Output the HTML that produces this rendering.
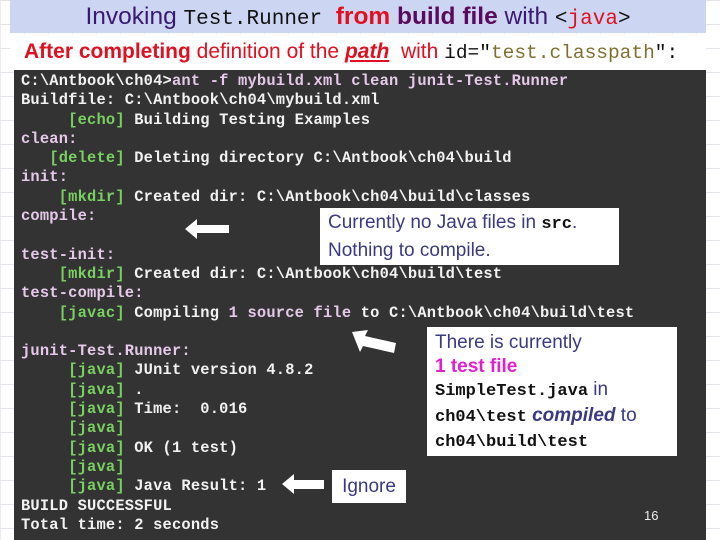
<!DOCTYPE html>
<html><head><meta charset="utf-8"><style>
*{margin:0;padding:0}
body{width:720px;height:540px;position:relative;overflow:hidden;background:#fff;font-family:"Liberation Sans",sans-serif;
background-image:linear-gradient(#e4e4ea 1px,transparent 1px),linear-gradient(90deg,#ececf0 1px,transparent 1px);background-size:24px 24px}
.title{position:absolute;left:10px;top:0;width:696px;height:33px;background:#ccd6f2;text-align:center;font-size:24.5px;line-height:34px;color:#3a1a70;white-space:nowrap}
.m{font-family:"Liberation Mono",monospace;color:#111}
.sub{position:absolute;left:10px;top:34px;width:696px;height:36px;background:#fff;font-size:21px;line-height:36px;color:#e01020;white-space:nowrap;padding-left:14px;box-sizing:border-box}
.term{position:absolute;left:14px;top:70px;width:692px;height:470px;background:#333}
pre{position:absolute;left:21px;top:72px;font-family:"Liberation Mono",monospace;font-weight:bold;font-size:15.4px;letter-spacing:0.2px;line-height:19.3px;color:#f2f2f2}
.p{color:#e6c8ea}.g{color:#78d060}
.box{position:absolute;background:#fff;color:#3a3a80;font-size:19px}
.arrow{position:absolute}
</style></head><body>
<div class="title">Invoking <span class="m" style="font-size:21px">Test.Runner</span> <b style="color:#e01020">&nbsp;from</b> <b style="color:#5a0a5a">build file</b> with <span class="m" style="font-size:21px">&lt;<span style="color:#e01020">java</span>&gt;</span></div>
<div class="sub"><b>After completing</b> definition of the <b><i><u>path</u></i></b>&nbsp; with <span class="m" style="font-size:19.5px">id="<span style="color:#807030">test.classpath</span>":</span></div>
<div class="term"></div>
<pre>C:\Antbook\ch04&gt;<span class="p">ant -f mybuild.xml clean junit-Test.Runner</span>
Buildfile: C:\Antbook\ch04\mybuild.xml
     <span class="g">[echo]</span> Building Testing Examples
<span class="p">clean:</span>
   <span class="g">[delete]</span> Deleting directory C:\Antbook\ch04\build
<span class="p">init:</span>
    <span class="g">[mkdir]</span> Created dir: C:\Antbook\ch04\build\classes
<span class="p">compile:</span>

<span class="p">test-init:</span>
    <span class="g">[mkdir]</span> Created dir: C:\Antbook\ch04\build\test
<span class="p">test-compile:</span>
    <span class="g">[javac]</span> Compiling <span class="p">1 source file</span> to C:\Antbook\ch04\build\test

<span class="p">junit-Test.Runner:</span>
     <span class="g">[java]</span> JUnit version 4.8.2
     <span class="g">[java]</span> .
     <span class="g">[java]</span> Time:  0.016
     <span class="g">[java]</span>
     <span class="g">[java]</span> OK (1 test)
     <span class="g">[java]</span>
     <span class="g">[java]</span> Java Result: 1
BUILD SUCCESSFUL
Total time: 2 seconds</pre>
<div class="box" style="left:320px;top:208px;width:299px;height:57px;line-height:26px;padding-left:8px;box-sizing:border-box;padding-top:2px">Currently no Java files in <b class="m" style="font-size:17px">src</b>.<br>Nothing to compile.</div>
<div class="box" style="left:427px;top:327px;width:250px;height:129px;padding:4px 0 0 8px;box-sizing:border-box;line-height:23.5px">There is currently<br><b style="color:#e020d0">1 test file</b><br><b class="m" style="font-size:17px">SimpleTest.java</b> in<br><b class="m" style="font-size:17px">ch04\test</b> <b><i>compiled</i></b> to<br><b class="m" style="font-size:17px">ch04\build\test</b></div>
<div class="box" style="left:332px;top:470px;width:74px;height:33px;line-height:33px;text-align:center">Ignore</div>
<div style="position:absolute;left:644px;top:508px;color:#eee;font-size:13px">16</div>
<svg class="arrow" style="left:183px;top:217px" width="48" height="24"><polygon points="2,12 14,2 14,8 46,8 46,16 14,16 14,22" fill="#fff"/></svg>
<svg class="arrow" style="left:280px;top:472px" width="48" height="24"><polygon points="2,12 14,2 14,8 44,8 44,17 14,17 14,22" fill="#fff"/></svg>
<svg class="arrow" style="left:350px;top:328px" width="48" height="28"><polygon points="2,4 18,2 15,8 46,15 44,25 13,18 10,24" fill="#fff"/></svg>
</body></html>
